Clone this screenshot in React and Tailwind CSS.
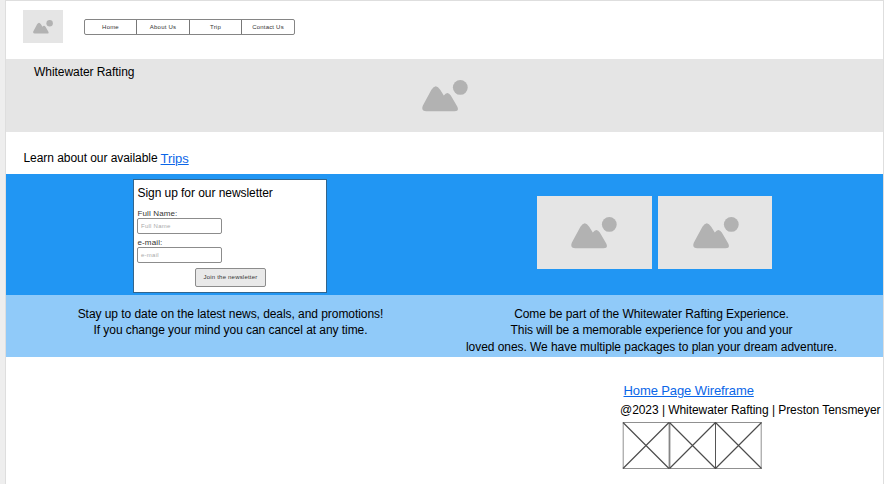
const NAV = ["Home", "About Us", "Trip", "Contact Us"];

function Mountains({ className }) {
  return (
    <svg viewBox="0 0 46 32" className={className} fill="#b2b2b2" aria-hidden="true">
      <circle cx="38.3" cy="7.4" r="7.4" />
      <path d="M0.9 25.6 L9.4 9.8 Q13.8 2.6 18.2 9.8 L21.8 15.6 Q25.4 10.2 28.8 15.6 L35.1 26.2 Q37.6 31.2 32.6 31.2 H4.4 Q-1.4 31 0.9 25.6 Z" />
    </svg>
  );
}

function Placeholder({ className, icon }) {
  return (
    <div className={`flex items-center justify-center bg-[#e5e5e5] ${className}`}>
      <Mountains className={icon} />
    </div>
  );
}

function CrossBoxes() {
  return (
    <svg className="ml-[16px] mt-[3px] block h-[48px] w-[141px]" viewBox="0 0 141 48" fill="none">
      <path d="M1 1.5 H139.5 M1 47.5 H139.5" stroke="#909090" />
      <path d="M1.2 1 V48 M139.2 1 V48" stroke="#909090" />
      <path d="M47.5 1 V48" stroke="#858585" strokeWidth="1.8" />
      <path d="M93.5 1 V48" stroke="#555" />
      <path
        d="M1 1.5 L47 47.5 M47 1.5 L1 47.5 M47.5 1.5 L93.5 47.5 M93.5 1.5 L47.5 47.5 M93.5 1.5 L139.5 47.5 M139.5 1.5 L93.5 47.5"
        stroke="#4c4c4c"
        strokeWidth="1.15"
      />
    </svg>
  );
}

function Field({ label, hint, className }) {
  return (
    <div className={className}>
      <div className="h-[11px] pl-[0.5px] pt-[1px] text-[8px] leading-[11px] tracking-[0.13px] text-[#333]">{label}</div>
      <div className="flex h-[16px] w-[85px] items-center rounded-[2px] border border-[#8c8c8c] bg-white pl-[3px] text-[6px] tracking-[0.25px] text-[#aaa]">
        {hint}
      </div>
    </div>
  );
}

export default function App() {
  return (
    <div className="flex h-[484px] w-[884px] overflow-hidden whitespace-nowrap bg-[#eeeeee] pl-[5px] font-['Liberation_Sans',Arial,sans-serif] text-[12px] tracking-[-0.055px] text-black">
      <div className="flex w-[879px] flex-col border-x border-t border-[#dedede] bg-white">
        <header className="flex h-[58px] shrink-0 pl-[17px] pt-[9px]">
          <Placeholder className="h-[33px] w-[40px]" icon="h-[14px] w-[20px]" />
          <nav className="ml-[21px] mt-[9px] grid h-[16px] w-[211px] grid-cols-[51px_53px_52px_53px] rounded-[2px] border border-[#858585] text-[6px] tracking-[0.2px] text-[#333]">
            {NAV.map((item, i) => (
              <span
                key={item}
                className={`flex items-center justify-center ${i ? "border-l border-[#777]" : ""}`}
              >
                {item}
              </span>
            ))}
          </nav>
        </header>

        <section className="grid h-[73px] shrink-0 grid-cols-3 bg-[#e5e5e5]">
          <h1 className="pl-[28px] pt-[5px] leading-[16px]">Whitewater Rafting</h1>
          <div className="flex items-center justify-center pl-[2px]">
            <Mountains className="h-[32px] w-[46px]" />
          </div>
        </section>

        <p className="flex h-[42px] shrink-0 pl-[17.5px] pt-[18px] leading-[16px]">
          Learn about our available
          <a className="ml-[3px] text-[13px] leading-[17px] text-[#0a66e8] underline">Trips</a>
        </p>

        <section className="flex h-[121px] shrink-0 bg-[#2196f3]">
          <form className="ml-[127px] mt-[5px] h-[114px] w-[194px] border border-[#33658c] bg-white pl-[3px] pt-[5px]">
            <h2 className="pl-[0.5px] leading-[16px]">Sign up for our newsletter</h2>
            <Field className="mt-[6px]" label="Full Name:" hint="Full Name" />
            <Field className="mt-[2px]" label="e-mail:" hint="e-mail" />
            <div className="ml-[58px] mt-[5px] flex h-[19px] w-[71px] items-center justify-center rounded-[2px] border border-[#8c8c8c] bg-[#e9e9e9] text-[6px] tracking-[0.2px] text-[#333]">
              Join the newsletter
            </div>
          </form>
          <div className="ml-[210px] mt-[22px] flex gap-[6px]">
            <Placeholder className="h-[73px] w-[115px] pr-[1px]" icon="h-[32px] w-[46px]" />
            <Placeholder className="h-[73px] w-[114px] pl-[1px]" icon="h-[32px] w-[46px]" />
          </div>
        </section>

        <section className="flex h-[62px] shrink-0 bg-[#90caf9] pt-[11px] text-center leading-[16.4px]">
          <p className="w-[449px]">
            Stay up to date on the latest news, deals, and promotions!
            <br />
            If you change your mind you can cancel at any time.
          </p>
          <p className="w-[393px]">
            Come be part of the Whitewater Rafting Experience.
            <br />
            This will be a memorable experience for you and your
            <br />
            loved ones. We have multiple packages to plan your dream adventure.
          </p>
        </section>

        <footer className="pl-[600px] pt-[25px]">
          <a className="ml-[17.5px] block text-[13px] leading-[17px] tracking-[-0.1px] text-[#0a66e8] underline">Home Page Wireframe</a>
          <p className="ml-[14px] mt-[3px] leading-[16px]">@2023 | Whitewater Rafting | Preston Tensmeyer</p>
          <CrossBoxes />
        </footer>
      </div>
    </div>
  );
}
